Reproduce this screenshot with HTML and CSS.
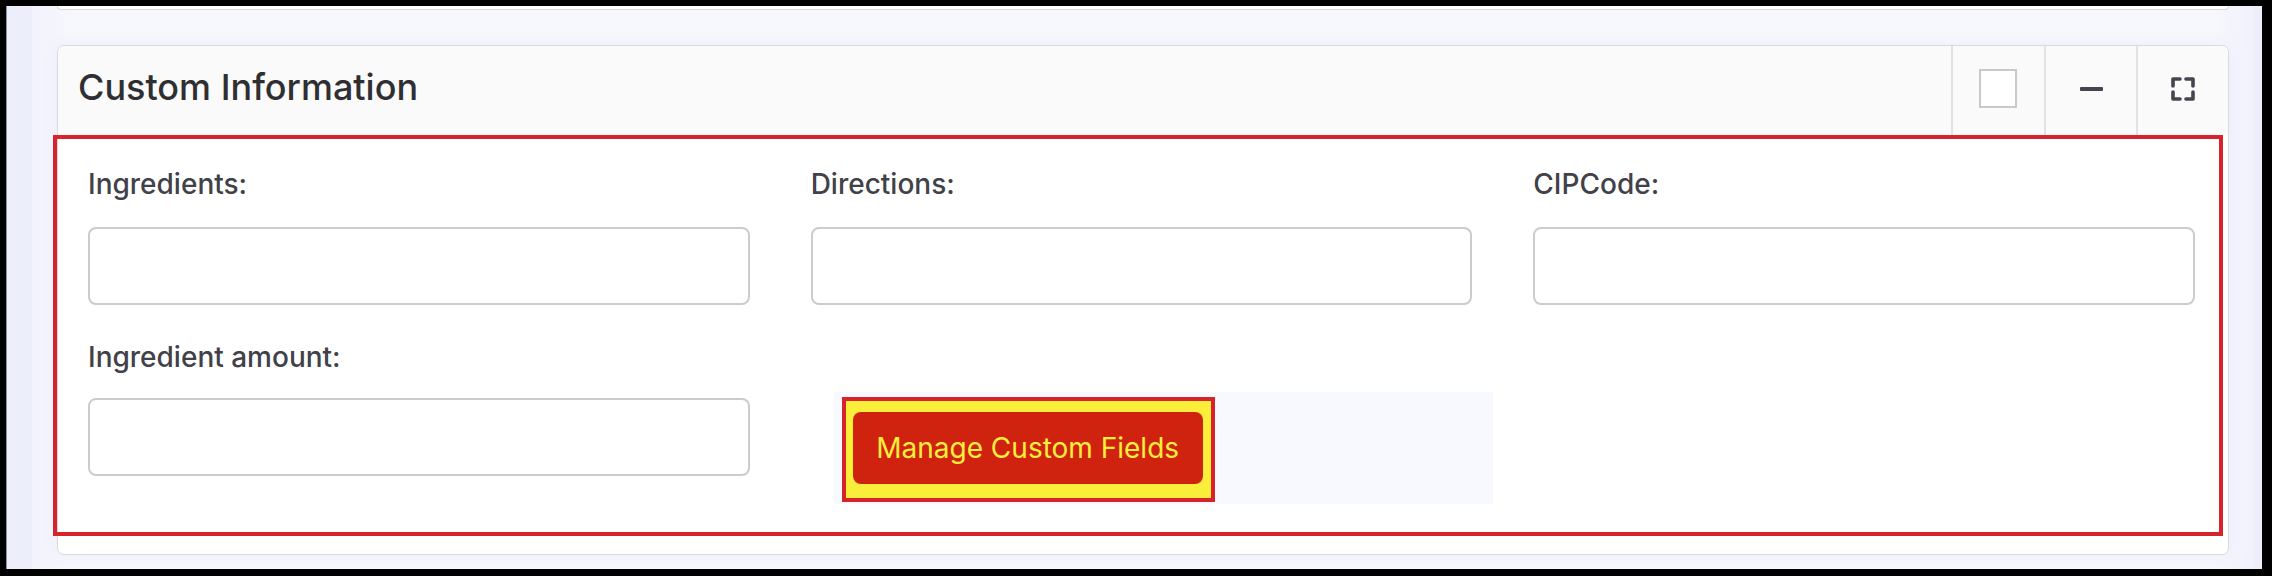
FILE: index.html
```html
<!DOCTYPE html>
<html>
<head>
<meta charset="utf-8">
<link rel="stylesheet" href="styles.css">
</head>
<body>
<div class="frame">
  <div class="strip-left"></div>
  <div class="page">
    <div class="prev-card"></div>
    <div class="card">
      <div class="card-header">
        <div class="card-title">Custom Information</div>
        <div class="tools">
          <div class="tool"><span class="check"></span></div>
          <div class="tool">
            <svg width="23" height="6" viewBox="0 0 23 6"><rect x="0" y="1" width="23" height="4" rx="1" fill="#45454f"/></svg>
          </div>
          <div class="tool">
            <svg width="24" height="24" viewBox="0 0 24 24" fill="none" stroke="#45454f" stroke-width="3.6" stroke-linecap="round" stroke-linejoin="round">
              <path d="M2 9V2h7"/><path d="M15 2h7v7"/><path d="M22 15v7h-7"/><path d="M9 22H2v-7"/>
            </svg>
          </div>
        </div>
      </div>
      <div class="card-body">
        <div class="grid">
          <div class="field">
            <label class="label">Ingredients:</label>
            <div class="input"></div>
          </div>
          <div class="field">
            <label class="label">Directions:</label>
            <div class="input"></div>
          </div>
          <div class="field">
            <label class="label">CIPCode:</label>
            <div class="input"></div>
          </div>
          <div class="field">
            <label class="label">Ingredient amount:</label>
            <div class="input"></div>
          </div>
          <div class="action-area">
            <div class="highlight">
              <button class="btn">Manage Custom Fields</button>
            </div>
          </div>
        </div>
      </div>
    </div>
  </div>
  <div class="strip-right"></div>
</div>
</body>
</html>
```

FILE: styles.css
```css
* { box-sizing: border-box; }
html, body { margin: 0; padding: 0; }
body {
  background: #000;
  width: 2272px;
  height: 576px;
  overflow: hidden;
  font-family: Inter, "Noto Sans", sans-serif;
}
.frame {
  margin: 6px 10px 0 6px;
  height: 563px;
  display: flex;
  border-left: 1px solid #8d8fa6;
  overflow: hidden;
}
.strip-left {
  width: 25px;
  flex: none;
  background: #eceefa;
}
.strip-right {
  width: 8px;
  flex: none;
  background: #eceefa;
}
.page {
  flex: 1;
  background: linear-gradient(90deg, #f2f3fc 0, #f7f8fd 40px, #f7f8fd calc(100% - 40px), #f0f1fb 100%);
  padding: 0 25px;
}
.prev-card {
  height: 4px;
  background: #fff;
  border: 1px solid #d8d9de;
  border-top: none;
  border-radius: 0 0 7px 7px;
  margin-bottom: 35px;
}
.card {
  background: #fff;
  border: 1px solid #d8d9de;
  border-radius: 7px;
  box-shadow: 0 0 18px rgba(90, 100, 200, 0.07);
  height: 510px;
}
.card-header {
  height: 89px;
  background: #fafafa;
  border-radius: 7px 7px 0 0;
  display: flex;
  align-items: stretch;
  justify-content: space-between;
}
.card-title {
  padding-left: 20px;
  align-self: center;
  margin-top: -7px;
  font-size: 36px;
  font-weight: 500;
  color: #2f2f33;
}
.tools {
  display: flex;
}
.tool {
  width: 92px;
  border-left: 2px solid #e2e2e4;
  display: flex;
  align-items: center;
  justify-content: center;
}
.tool:first-child { width: 93px; }
.check {
  display: block;
  width: 38px;
  height: 39px;
  border: 2px solid #c9c9cb;
  background: #fff;
  margin-right: 2px;
  margin-top: -4px;
}
.tool svg { margin-top: -4px; }
.card-body {
  border: 4px solid #d7232b;
  margin: 0 5px 0 -5px;
  height: 401px;
}
.grid {
  display: grid;
  grid-template-columns: 1fr 1fr 1fr;
  column-gap: 61px;
  row-gap: 31px;
  padding: 24px 24px 0 31px;
}
.field {
  display: flex;
  flex-direction: column;
}
.label {
  font-size: 28px;
  line-height: 42px;
  font-weight: 500;
  color: #414149;
  margin-bottom: 22px;
}
.field:nth-child(4) .label { margin-bottom: 20px; }
.input {
  height: 78px;
  border: 2px solid #cccccc;
  border-radius: 8px;
  background: #fff;
}
.action-area {
  margin: 56px -21px 0 23px;
  background: #f7f9fe;
  padding: 5px 8px 2px;
  height: 112px;
}
.highlight {
  display: inline-block;
  border: 4px solid #d7232b;
  background: #f9ee3a;
  padding: 11px 8px 14px 7px;
}
.btn {
  display: flex;
  align-items: center;
  justify-content: center;
  width: 350px;
  height: 72px;
  border: none;
  border-radius: 8px;
  background: #cf2310;
  color: #fbee3c;
  font-family: Inter, "Noto Sans", sans-serif;
  font-size: 28px;
  font-weight: 400;
  padding: 0;
}
```
